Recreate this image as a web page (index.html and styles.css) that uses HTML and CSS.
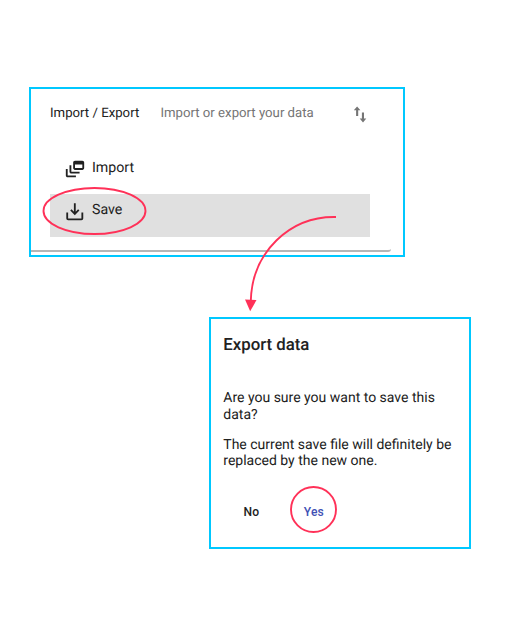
FILE: index.html
```html
<!DOCTYPE html>
<html lang="en">
<head>
<meta charset="utf-8">
<title>Import / Export</title>
<link rel="stylesheet" href="styles.css">
</head>
<body>
<main class="page">
  <section class="panel">
    <header class="panel-header">
      <span class="panel-title">Import / Export</span>
      <span class="panel-description">Import or export your data</span>
      <svg class="swap-icon" viewBox="0 0 14 18"><path d="M2.1 10V4.3H-.2L3.1.6l3.3 3.7H4.2V10zM7.9 6.6v6H5.7L9 16.4l3.3-3.8H10v-6z"/></svg>
    </header>
    <ul class="menu">
      <li class="menu-item">
        <svg class="menu-icon" viewBox="0 0 24 24"><path d="M8 8H6v7c0 1.1.9 2 2 2h9v-2H8zM20 3h-8c-1.1 0-2 .9-2 2v6c0 1.1.9 2 2 2h8c1.1 0 2-.9 2-2V5c0-1.1-.9-2-2-2zm0 8h-8V7h8zM4 12H2v7c0 1.1.9 2 2 2h9v-2H4z"/></svg>
        <span>Import</span>
      </li>
      <li class="menu-item active">
        <svg class="menu-icon outlined" viewBox="0 0 24 24"><path d="M3.5 13.5v6.7c0 .6.4 1 1 1h14.5c.6 0 1-.4 1-1v-6.7M11.8 3.5v11.5M7.5 10.8l4.3 4.3 4.3-4.3"/></svg>
        <span>Save</span>
      </li>
    </ul>
    <div class="card-edge"></div>
  </section>

  <section class="dialog">
    <h1>Export data</h1>
    <p>Are you sure you want to save this<br>data?</p>
    <p>The current save file will definitely be<br>replaced by the new one.</p>
    <div class="actions">
      <button class="no">No</button>
      <button class="yes">Yes</button>
    </div>
  </section>

  <svg class="annotations" viewBox="0 0 521 636">
    <ellipse cx="94.5" cy="211" rx="51" ry="23"/>
    <circle cx="313.5" cy="509.5" r="22.5"/>
    <path d="M336 217C290 216 252 252 250.8 301"/>
    <path class="arrow-head" d="M245 299.5l11.5.5-6.3 11.3z"/>
  </svg>
</main>
</body>
</html>
```
FILE: styles.css
```css
* { box-sizing: border-box; }

body {
  margin: 0;
  background: #fff;
  color: #212121;
  font-family: Roboto, "Liberation Sans", sans-serif;
  text-rendering: geometricPrecision;
}

.page {
  position: relative;
  width: 521px;
  height: 636px;
  padding-top: 87px;
  overflow: hidden;
}

.panel, .dialog { border: 2px solid #00c8ff; }

.panel {
  width: 376px;
  height: 170px;
  margin-left: 29px;
}

.panel-header {
  display: flex;
  height: 63px;
  padding: 16px 0 0 19px;
  font-size: 13.2px;
  line-height: 18px;
}

.panel-title { width: 110.4px; }
.panel-description { width: 193.6px; color: #757575; }

.swap-icon {
  width: 14px;
  height: 18px;
  margin-top: 1px;
  fill: #757575;
}

.menu {
  width: 320.4px;
  margin: 0 0 0 19px;
  padding: 0;
  list-style: none;
}

.menu-item {
  display: flex;
  gap: 6px;
  height: 42px;
  padding: 6px 0 0 14px;
  font-size: 14.2px;
  line-height: 20px;
}

.menu-item.active {
  height: 43px;
  background: #e0e0e0;
}

.menu-icon {
  width: 22px;
  height: 22px;
  fill: #212121;
}

.menu-icon.outlined {
  fill: none;
  stroke: #212121;
  stroke-width: 2;
}

.card-edge {
  width: 360px;
  height: 3px;
  margin-top: 12px;
  border-bottom: 2px solid #b5b5b5;
  border-radius: 0 0 3px 0;
}

.dialog {
  width: 262px;
  height: 232px;
  margin: 60px 0 0 209px;
  padding: 16px 0 0 12.3px;
}

.dialog h1 {
  margin: 0 0 35px;
  font-size: 16.8px;
  font-weight: 500;
  line-height: 20px;
}

.dialog p {
  margin: 0 0 13.5px;
  font-size: 14px;
  line-height: 16.5px;
  white-space: nowrap;
}

.actions {
  display: flex;
  gap: 30px;
  padding: 20px 0 0 12.5px;
}

.actions button {
  width: 31px;
  padding: 0;
  border: 0;
  background: none;
  color: #212121;
  font: 500 12.1px/18px Roboto, sans-serif;
  letter-spacing: .1px;
}

.actions .yes { color: #3f51b5; width: 34px; }

.annotations {
  position: absolute;
  top: 0;
  left: 0;
  width: 521px;
  height: 636px;
  fill: none;
  stroke: #ff3158;
  stroke-width: 1.9;
  pointer-events: none;
}

.annotations .arrow-head { fill: #ff3158; stroke: none; }
```
